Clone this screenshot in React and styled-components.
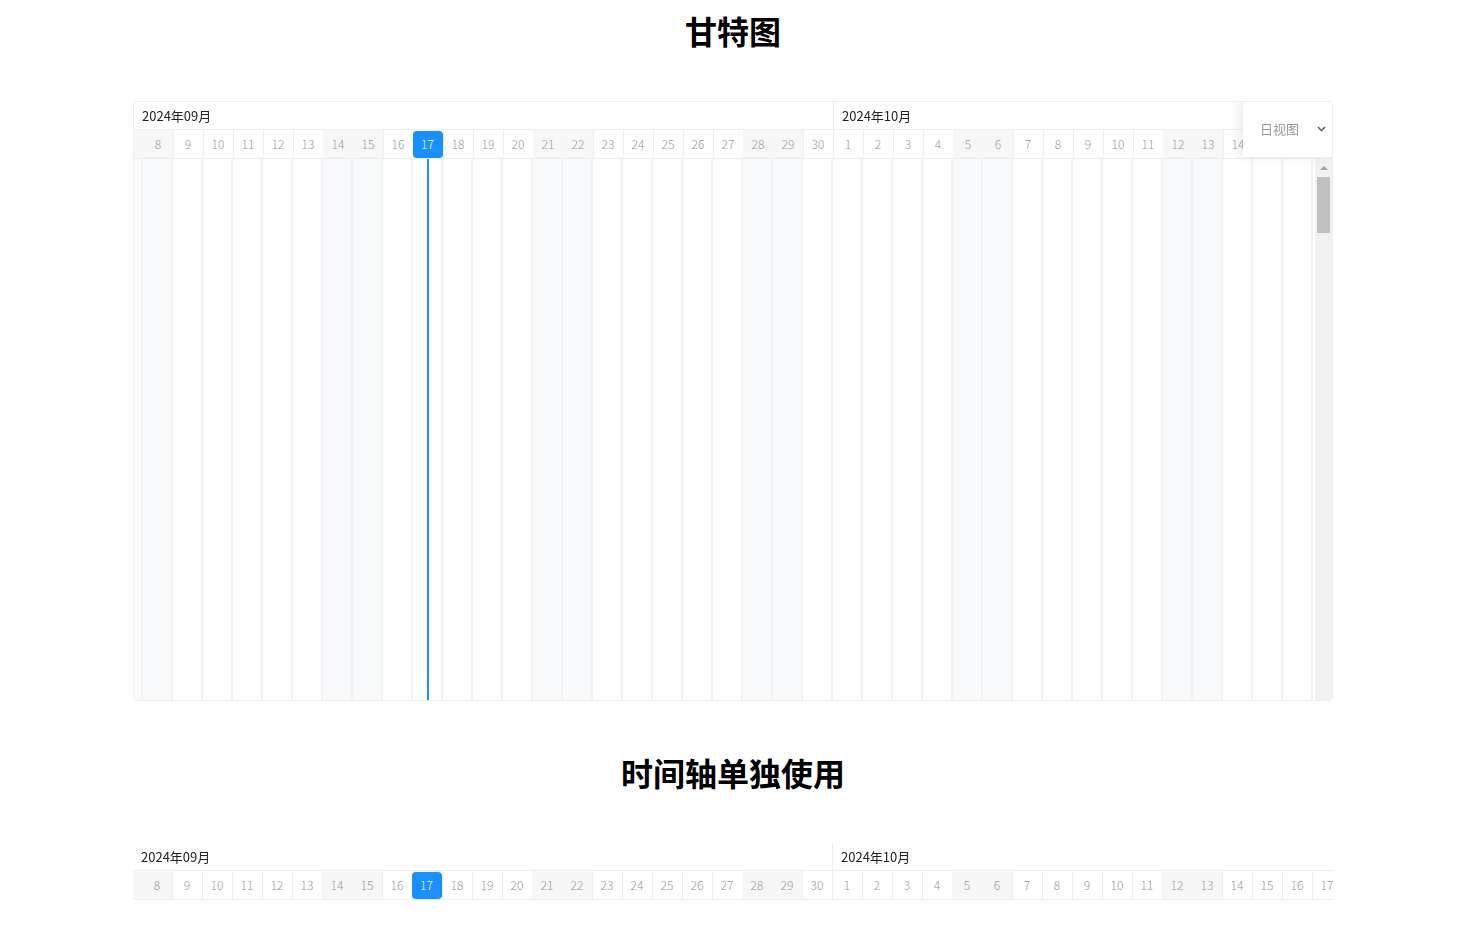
import React, { useLayoutEffect, useRef } from 'react'
import styled, { createGlobalStyle } from 'styled-components'

const CELL = 30
const SCROLL = 201
const TODAY = '2024-09-17'

const GlobalStyle = createGlobalStyle`
  html, body {
    margin: 0;
    padding: 0;
    background: #fff;
    font-family: "Noto Sans CJK SC", "Noto Sans", sans-serif;
  }
`

// two months of days, Sept 1 .. Oct 31 2024
const buildMonths = () => {
  const months = []
  for (const m of [8, 9]) {
    const days = []
    const last = new Date(2024, m + 1, 0).getDate()
    for (let d = 1; d <= last; d++) {
      const date = new Date(2024, m, d)
      const key = `2024-${String(m + 1).padStart(2, '0')}-${String(d).padStart(2, '0')}`
      days.push({
        key,
        day: d,
        weekend: date.getDay() === 0 || date.getDay() === 6,
        today: key === TODAY,
      })
    }
    months.push({ label: `2024年${String(m + 1).padStart(2, '0')}月`, days })
  }
  return months
}

const months = buildMonths()
const allDays = months.flatMap((m) => m.days)

const useScrollLeft = () => {
  const ref = useRef(null)
  useLayoutEffect(() => {
    if (ref.current) ref.current.scrollLeft = SCROLL
  }, [])
  return ref
}

const Timeline = () => {
  const ref = useScrollLeft()
  return (
    <HeaderScroll ref={ref}>
      <Track>
        <MonthRow>
          {months.map((m) => (
            <MonthCell key={m.label} $count={m.days.length}>
              <MonthLabel>{m.label}</MonthLabel>
            </MonthCell>
          ))}
        </MonthRow>
        <DayRow>
          {allDays.map((d) => (
            <DayCell key={d.key} $weekend={d.weekend}>
              {d.today ? <TodayBadge>{d.day}</TodayBadge> : d.day}
            </DayCell>
          ))}
        </DayRow>
      </Track>
    </HeaderScroll>
  )
}

const GanttBody = () => {
  const ref = useScrollLeft()
  return (
    <Body>
      <ColumnsScroll ref={ref}>
        <Columns>
          {allDays.map((d) => (
            <Column key={d.key} $weekend={d.weekend}>
              {d.today && <TodayLine />}
            </Column>
          ))}
        </Columns>
      </ColumnsScroll>
      <ScrollBar>
        <ScrollArrow />
        <ScrollThumb />
      </ScrollBar>
    </Body>
  )
}

const App = () => (
  <>
    <GlobalStyle />
    <Page>
      <Title>甘特图</Title>
      <GanttFrame>
        <Timeline />
        <GanttBody />
        <ViewSelect>
          <span>日视图</span>
          <svg width="9" height="6" viewBox="0 0 9 6">
            <path d="M1 1l3.5 3.5L8 1" fill="none" stroke="#666" strokeWidth="1.6" />
          </svg>
        </ViewSelect>
      </GanttFrame>
      <Title $second>时间轴单独使用</Title>
      <Standalone>
        <Timeline />
      </Standalone>
    </Page>
  </>
)

const Page = styled.div`
  display: flex;
  flex-direction: column;
  align-items: center;
  padding-right: 4px;
`

const Title = styled.h1`
  margin: ${(p) => (p.$second ? '53px 0 52px' : '12px 0 52px')};
  font-size: 32px;
  line-height: 37px;
  font-weight: 700;
  color: #000;
`

const GanttFrame = styled.div`
  position: relative;
  width: 1200px;
  height: 600px;
  box-sizing: border-box;
  border: 1px solid #eee;
  border-radius: 4px;
  overflow: hidden;
  display: flex;
  flex-direction: column;
`

const Standalone = styled.div`
  width: 1200px;
`

const HeaderScroll = styled.div`
  overflow: hidden;
  flex: none;
`

const Track = styled.div`
  width: ${allDays.length * CELL}px;
`

const MonthRow = styled.div`
  display: flex;
  height: 28px;
  box-sizing: border-box;
  border-bottom: 1px solid #eee;
`

const MonthCell = styled.div`
  display: flex;
  align-items: center;
  flex: none;
  width: ${(p) => p.$count * CELL}px;
  box-sizing: border-box;
  border-left: 1px solid #eee;
`

const MonthLabel = styled.span`
  position: sticky;
  left: 0;
  padding-left: 8px;
  font-size: 13px;
  color: #222;
  white-space: nowrap;
`

const DayRow = styled.div`
  display: flex;
  height: 29px;
  box-sizing: border-box;
  border-bottom: 1px solid #eee;
`

const DayCell = styled.div`
  flex: none;
  width: ${CELL}px;
  box-sizing: border-box;
  padding: 0 1px 2px 0;
  border-left: 1px solid ${(p) => (p.$weekend ? '#f7f7f7' : '#eee')};
  background: ${(p) => (p.$weekend ? '#f7f7f7' : '#fff')};
  display: flex;
  align-items: center;
  justify-content: center;
  font-size: 12px;
  font-weight: 300;
  color: #999;
`

const TodayBadge = styled.span`
  display: flex;
  align-items: center;
  justify-content: center;
  width: 30px;
  height: 27px;
  margin: 0 -1px -2px -1px;
  padding: 0 1px 2px 0;
  box-sizing: border-box;
  border-radius: 4px;
  background: #1890ff;
  color: #fff;
`

const Body = styled.div`
  flex: 1;
  display: flex;
  min-height: 0;
`

const ColumnsScroll = styled.div`
  flex: 1;
  overflow: hidden;
`

const Columns = styled.div`
  display: flex;
  height: 100%;
  width: ${allDays.length * CELL}px;
`

const Column = styled.div`
  flex: none;
  width: ${CELL}px;
  height: 100%;
  box-sizing: border-box;
  border-right: 2px solid #f2f2f2;
  background: ${(p) => (p.$weekend ? '#f9fafb' : '#fff')};
  display: flex;
  justify-content: center;
`

const TodayLine = styled.div`
  width: 2px;
  margin-left: 2px;
  height: 100%;
  background: #1890ff;
`

const ScrollBar = styled.div`
  flex: none;
  width: 17px;
  background: #f1f1f1;
  display: flex;
  flex-direction: column;
  align-items: center;
  padding-top: 7px;
  box-sizing: border-box;
`

const ScrollArrow = styled.div`
  width: 0;
  height: 0;
  border-left: 4px solid transparent;
  border-right: 4px solid transparent;
  border-bottom: 4px solid #a3a3a3;
`

const ScrollThumb = styled.div`
  width: 13px;
  height: 56px;
  margin-top: 7px;
  background: #c1c1c1;
`

const ViewSelect = styled.div`
  position: absolute;
  top: 0;
  right: 0;
  width: 89px;
  height: 56px;
  box-sizing: border-box;
  background: #fff;
  border-bottom: 1px solid #eee;
  box-shadow: -6px 0 8px rgba(0, 0, 0, 0.06);
  display: flex;
  align-items: center;
  justify-content: space-between;
  padding: 0 6px 2px 17px;
  font-size: 13px;
  color: #999;
`

export default App
